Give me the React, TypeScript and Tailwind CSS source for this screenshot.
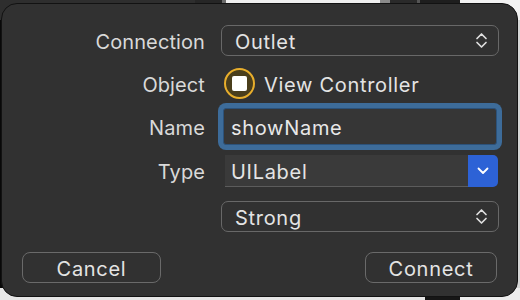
import type { ReactNode } from "react";

const font = { fontFamily: "Inter, 'Noto Sans', 'Liberation Sans', sans-serif" };

const UpDown = () => (
  <svg width="13" height="17" viewBox="0 0 13 17" fill="none">
    <path d="M2 6.5 L6.5 2 L11 6.5" stroke="#dedede" strokeWidth="1.7" strokeLinecap="round" strokeLinejoin="round" />
    <path d="M2 10.5 L6.5 15 L11 10.5" stroke="#dedede" strokeWidth="1.7" strokeLinecap="round" strokeLinejoin="round" />
  </svg>
);

const Popup = ({ value }: { value: string }) => (
  <div className="flex h-full w-[278px] items-center justify-between rounded-[7px] border-[1.5px] border-[#686868] pl-[13px] pr-[10px]">
    <span className="pt-[2px] tracking-[0.7px] text-[#e4e4e4]">{value}</span>
    <UpDown />
  </div>
);

const Row = ({ label, h, mt, children }: { label?: string; h: number; mt: number; children: ReactNode }) => (
  <div className="flex items-center" style={{ height: h, marginTop: mt }}>
    <div className="w-[203px] shrink-0 pt-[2px] text-right text-[#d9d9d9]">{label}</div>
    <div className="ml-[16px] flex h-full items-center">{children}</div>
  </div>
);

export default function App() {
  return (
    <div className="relative h-[300px] w-[520px] overflow-hidden bg-[#e9e9e9] text-[20px] tracking-[0.1px]" style={font}>
      {/* windows behind the sheet */}
      <div className="flex h-full flex-col">
        <div className="flex h-[20px]">
          <div className="w-[195px] bg-[#2e2e2e]" />
          <div className="w-[27px] bg-[#262626]" />
          <div className="w-[4px] bg-[#6b6b6b]" />
          <div className="w-[154px] bg-[#efefef]" />
          <div className="w-[10px] bg-[#8a8a8a]" />
          <div className="w-[27px] bg-[#2a2a2a]" />
          <div className="w-[3px] bg-[#555]" />
          <div className="w-[40px] bg-[#1e1e1e]" />
          <div className="flex-1 bg-[#f2f2f2]" />
        </div>
        <div className="flex flex-1">
          <div className="w-[4px] bg-[#080808]" />
          <div className="flex-1" />
          <div className="w-[3px] bg-[#d6d6d6]" />
        </div>
        <div className="flex h-[12px]">
          <div className="w-[425px] bg-[#e6e6e6]" />
          <div className="w-[35px] bg-[#161616]" />
          <div className="flex-1 bg-[#ececec]" />
        </div>
      </div>

      {/* sheet */}
      <div className="absolute left-[1px] top-[3px] flex h-[294px] w-[517px] flex-col rounded-[16px] border border-[#121212] bg-[#313131] pt-[21px]">
        <Row label="Connection" h={31} mt={0}>
          <Popup value="Outlet" />
        </Row>

        <Row label="Object" h={31} mt={12}>
          <div className="ml-[3px] flex items-center">
            <div className="flex h-[31px] w-[31px] items-center justify-center rounded-full border-2 border-[#e8ae2c] bg-[#4a3e1c]">
              <div className="h-[15px] w-[15px] rounded-[2px] bg-white" />
            </div>
            <span className="ml-[9px] pt-[2px] tracking-[0.7px] text-[#e4e4e4]">View Controller</span>
          </div>
        </Row>

        <Row label="Name" h={47} mt={4}>
          <div className="-ml-[3px] flex h-[47px] w-[284px] rounded-[8px] bg-[#3d6c9a] p-[5px]">
            <div className="flex flex-1 items-center rounded-[3px] border border-[#2c527a] bg-[#363636] pl-[7px] pt-[2px] tracking-[0.7px] text-[#e8e8e8]">
              showName
            </div>
          </div>
        </Row>

        <Row label="Type" h={32} mt={5}>
          <div className="ml-[4px] flex h-[32px] w-[273px]">
            <div className="flex flex-1 items-center border-b border-[#5c5c5c] bg-[#3a3a3a] pl-[6px] pt-[2px] tracking-[0.7px] text-[#e4e4e4]">
              UILabel
            </div>
            <div className="flex w-[30px] items-center justify-center rounded-r-[5px] bg-[#2d62d6]">
              <svg width="12" height="8" viewBox="0 0 12 8" fill="none">
                <path d="M1.5 1.5 L6 6 L10.5 1.5" stroke="#fff" strokeWidth="1.8" strokeLinecap="round" strokeLinejoin="round" />
              </svg>
            </div>
          </div>
        </Row>

        <Row h={31} mt={14}>
          <Popup value="Strong" />
        </Row>

        <div className="mt-[20px] flex h-[31px] items-center justify-between pl-[20px] pr-[20px] tracking-[0.7px]">
          <div className="flex h-full w-[139px] items-center justify-center rounded-[8px] border-[1.5px] border-[#6a6a6a] pt-[2px] text-[#e4e4e4]">
            Cancel
          </div>
          <div className="flex h-full w-[132px] items-center justify-center rounded-[8px] border-[1.5px] border-[#6a6a6a] pt-[2px] text-[#e4e4e4]">
            Connect
          </div>
        </div>
      </div>
    </div>
  );
}
